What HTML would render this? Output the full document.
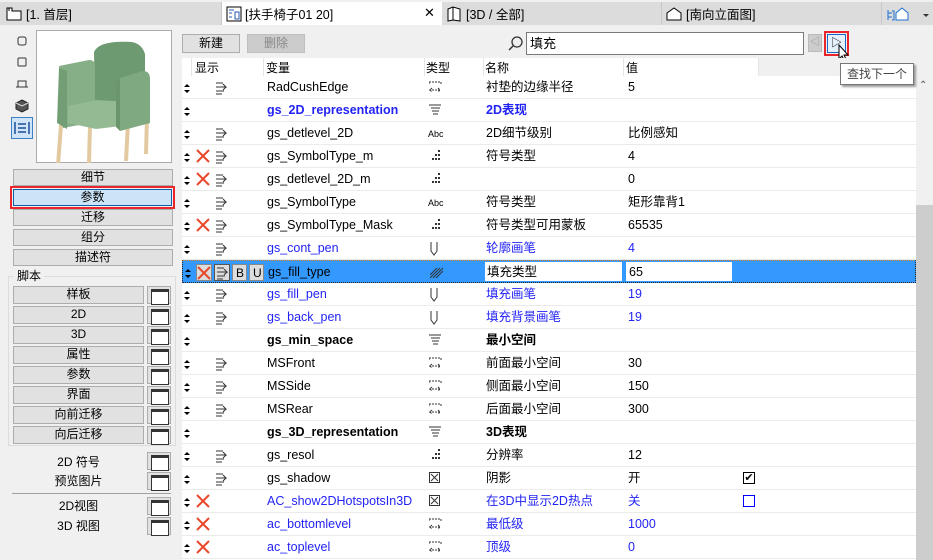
<!DOCTYPE html>
<html><head><meta charset="utf-8"><style>
*{margin:0;padding:0;box-sizing:border-box}
body{width:933px;height:560px;overflow:hidden;background:#f0f0f0;font-family:"Liberation Sans","Noto Sans CJK SC",sans-serif;font-size:12px;color:#000;position:relative}
.a{position:absolute}
.tabs{left:0;top:0;width:933px;height:25px;background:#dcdcdc;border-top:2px solid #f0f0f0}
.tab{top:2px;height:23px;line-height:22px;font-size:12.5px;padding-left:4px}
.btn{background:#e1e1e1;border:1px solid #adadad;text-align:center;line-height:15px;font-size:12px}
.ib{background:#e1e1e1;border:1px solid #adadad;width:24px;height:18px}
.ib:after{content:"";position:absolute;left:3px;top:2px;width:16px;height:12px;border:1px solid #333;border-top-width:3px;background:#fff}
.grid{left:182px;top:58px;width:734px;height:502px;background:#fff}
.row{position:absolute;left:0;width:734px;height:23px;border-bottom:1px solid #ebebeb;line-height:22px;font-size:12.5px}
.row span{position:absolute;white-space:nowrap}
.b{color:#2323f5}
.bb{color:#2323f5;font-weight:bold}
.k{font-weight:bold}
</style></head><body>
<div class="a tabs">
 <div class="a" style="left:0;top:0;width:222px;height:23px;border-right:1px solid #c8c8c8"></div>
 <svg class="a" style="left:6px;top:4px" width="16" height="16"><path d="M1 14V2h5v3h9v9z" fill="#fff" stroke="#000"/><path d="M3 2v3" stroke="#000"/></svg>
 <div class="a tab" style="left:22px">[1. 首层]</div>
 <div class="a" style="left:222px;top:0;width:220px;height:23px;background:#fff"></div>
 <svg class="a" style="left:226px;top:4px" width="16" height="16"><rect x="1" y="1" width="14" height="14" fill="#fff" stroke="#000"/><path d="M3 4h5M3 7h3M3 11h3M9 6h4v7H9z" stroke="#2a5bb0" fill="none"/></svg>
 <div class="a tab" style="left:241px">[扶手椅子01 20]</div>
 <div class="a" style="left:424px;top:3px;font-size:13px">✕</div>
 <svg class="a" style="left:446px;top:4px" width="16" height="16"><path d="M2 3l5-2 7 2v12l-7-1-5 1z" fill="#fff" stroke="#000"/><path d="M7 1v13" stroke="#000"/></svg>
 <div class="a tab" style="left:462px">[3D / 全部]</div>
 <div class="a" style="left:661px;top:0;width:1px;height:23px;background:#c8c8c8"></div>
 <svg class="a" style="left:666px;top:5px" width="16" height="14"><path d="M1 13V6l7-5 7 5v7z" fill="#fff" stroke="#000"/></svg>
 <div class="a tab" style="left:682px">[南向立面图]</div>
 <div class="a" style="left:881px;top:0;width:1px;height:23px;background:#c8c8c8"></div>
 <svg class="a" style="left:886px;top:4px" width="44" height="16"><path d="M2 4v10M2 7h4M2 11h4M6 5h2v9H6" stroke="#1d6fd0" fill="none"/><path d="M10 14V7l6-5 6 5v7zM16 2l6 5" fill="#fff" stroke="#1d6fd0"/><path d="M37 8h6l-3 3z" fill="#333"/></svg>
</div>

<svg class="a" style="left:13px;top:34px" width="20" height="106"><rect x="5" y="3" width="8" height="8" rx="2" fill="none" stroke="#333"/><rect x="5" y="24" width="8" height="8" rx="1" fill="none" stroke="#333"/><path d="M5 53v-6h8v6M3 53h12" fill="none" stroke="#333"/><path d="M9 66l6 3v6l-6 3-6-3v-6z" fill="#555" stroke="#222"/><path d="M3 69l6 3 6-3" stroke="#ddd" fill="none"/></svg>
<div class="a" style="left:11px;top:117px;width:22px;height:22px;background:#cfe4f7;border:1px solid #3c7fc7"></div>
<svg class="a" style="left:14px;top:121px" width="16" height="14"><path d="M1 1v12M15 1v12M4 3h8M4 7h8M4 11h8" stroke="#1a4f99" stroke-width="1.5"/></svg>

<div class="a" style="left:36px;top:30px;width:136px;height:133px;background:#fff;border:1px solid #aaa"></div>
<svg class="a" style="left:36px;top:30px" width="136" height="133">
 <path d="M25 95l-3 40M54 95l-1 38M92 93l-2 38M111 86l-1 38" stroke="#e3c9a0" stroke-width="4"/>
 <path d="M58 22q5-12 38-10q10 2 13 12v45l-50 8z" fill="#6e9a71"/>
 <path d="M23 36l30-6q6 0 6 6v56l-32 6z" fill="#86af87"/>
 <path d="M23 38l-2 55 10 6v-58z" fill="#739e75"/>
 <path d="M32 76l28-6 50 3v20l-50 6-28-6z" fill="#93ba92"/>
 <path d="M84 48l23-7q7 0 7 8v44l-30 8z" fill="#7fa980"/>
 <path d="M84 48l-4 5v44l4 4z" fill="#6b966d"/>
</svg>

<div class="a btn" style="left:13px;top:169px;width:160px;height:17px">细节</div>
<div class="a" style="left:10px;top:186px;width:165px;height:23px;border:2px solid #e8262b"></div>
<div class="a btn" style="left:13px;top:189px;width:159px;height:17px;background:#cce4f7;border-color:#0f5fa8">参数</div>
<div class="a btn" style="left:13px;top:209px;width:160px;height:17px">迁移</div>
<div class="a btn" style="left:13px;top:229px;width:160px;height:17px">组分</div>
<div class="a btn" style="left:13px;top:249px;width:160px;height:17px">描述符</div>
<div class="a" style="left:8px;top:276px;width:168px;height:170px;border:1px solid #dcdcdc"></div>
<div class="a" style="left:14px;top:267px;background:#f0f0f0;padding:0 3px;font-size:12px">脚本</div>
<div class="a btn" style="left:13px;top:286px;width:131px;height:18px">样板</div><div class="a ib" style="left:147px;top:286px"></div>
<div class="a btn" style="left:13px;top:306px;width:131px;height:18px">2D</div><div class="a ib" style="left:147px;top:306px"></div>
<div class="a btn" style="left:13px;top:326px;width:131px;height:18px">3D</div><div class="a ib" style="left:147px;top:326px"></div>
<div class="a btn" style="left:13px;top:346px;width:131px;height:18px">属性</div><div class="a ib" style="left:147px;top:346px"></div>
<div class="a btn" style="left:13px;top:366px;width:131px;height:18px">参数</div><div class="a ib" style="left:147px;top:366px"></div>
<div class="a btn" style="left:13px;top:386px;width:131px;height:18px">界面</div><div class="a ib" style="left:147px;top:386px"></div>
<div class="a btn" style="left:13px;top:406px;width:131px;height:18px">向前迁移</div><div class="a ib" style="left:147px;top:406px"></div>
<div class="a btn" style="left:13px;top:426px;width:131px;height:18px">向后迁移</div><div class="a ib" style="left:147px;top:426px"></div>
<div class="a" style="left:13px;top:453px;width:131px;text-align:center">2D 符号</div><div class="a ib" style="left:147px;top:452px"></div>
<div class="a" style="left:13px;top:472px;width:131px;text-align:center">预览图片</div><div class="a ib" style="left:147px;top:472px"></div>
<div class="a" style="left:12px;top:493px;width:159px;height:1px;background:#a0a0a0"></div>
<div class="a" style="left:13px;top:497px;width:131px;text-align:center">2D视图</div><div class="a ib" style="left:147px;top:497px"></div>
<div class="a" style="left:13px;top:517px;width:131px;text-align:center">3D 视图</div><div class="a ib" style="left:147px;top:517px"></div>

<div class="a btn" style="left:182px;top:34px;width:58px;height:19px;line-height:17px">新建</div>
<div class="a btn" style="left:247px;top:34px;width:58px;height:19px;line-height:17px;background:#ccc;border-color:#bfbfbf;color:#888">删除</div>
<svg class="a" style="left:508px;top:36px" width="16" height="16"><circle cx="9" cy="6" r="5" fill="none" stroke="#333" stroke-width="1.3"/><path d="M5 10l-4 4" stroke="#333" stroke-width="1.5"/></svg>
<div class="a" style="left:526px;top:32px;width:278px;height:23px;background:#fff;border:1px solid #7a7a7a;padding-left:3px;line-height:21px;font-size:13px">填充</div>
<div class="a" style="left:808px;top:34px;width:14px;height:18px;background:#ccc;border:1px solid #bbb;color:#999;font-size:10px;line-height:16px;text-align:center">◁</div>
<div class="a" style="left:824px;top:31px;width:25px;height:25px;border:2px solid #e8262b"></div>
<div class="a" style="left:827px;top:34px;width:19px;height:19px;background:#e5f1fb;border:1px solid #1a66c2;font-size:11px;line-height:17px;text-align:center">▷</div>
<svg class="a" style="left:838px;top:44px" width="14" height="20"><path d="M1 1v14l3-3 3 6 2-1-3-6h4z" fill="#fff" stroke="#000"/></svg>

<div class="a grid">
 <div class="a" style="left:0;top:0;width:734px;height:18px;background:#f0f0f0"></div>
 <div class="a" style="left:0;top:0;width:577px;height:18px;background:#fff"></div>
 <div class="a" style="left:13px;top:1px">显示</div>
 <div class="a" style="left:84px;top:1px">变量</div>
 <div class="a" style="left:244px;top:1px">类型</div>
 <div class="a" style="left:303px;top:1px">名称</div>
 <div class="a" style="left:444px;top:1px">值</div>
 <div class="a" style="left:9px;top:0;width:1px;height:18px;background:#e5e5e5"></div>
 <div class="a" style="left:81px;top:0;width:1px;height:18px;background:#e5e5e5"></div>
 <div class="a" style="left:242px;top:0;width:1px;height:18px;background:#e5e5e5"></div>
 <div class="a" style="left:301px;top:0;width:1px;height:18px;background:#e5e5e5"></div>
 <div class="a" style="left:441px;top:0;width:1px;height:18px;background:#e5e5e5"></div>
 <div class="a" style="left:576px;top:0;width:1px;height:18px;background:#e5e5e5"></div>
 <div id="rows"></div>
</div>
<div class="a" style="left:916px;top:76px;width:17px;height:484px;background:#f0f0f0"></div>
<div class="a" style="left:916px;top:205px;width:17px;height:355px;background:#cdcdcd"></div>
<div class="a" style="left:919px;top:80px;font-size:10px;color:#555">⌃</div>
<div class="a" style="left:840px;top:63px;width:74px;height:22px;background:#fff;border:1px solid #767676;box-shadow:2px 2px 2px #999;line-height:20px;text-align:center;font-size:12px;color:#444">查找下一个</div>

<svg width="0" height="0" style="position:absolute"><defs>
<g id="srt"><path d="M0 4l3-3 3 3zM0 7l3 3 3-3z" fill="#000"/></g>
<g id="x"><path d="M1 1l12 12M13 1L1 13" stroke="#e8482a" stroke-width="2"/></g>
<g id="sh"><path d="M0 1h7M0 5h10l-3-3M10 5l-3 3M0 9h8M0 12h6" stroke="#333" fill="none"/></g>
<g id="len"><path d="M0 1h12M0 1v2M12 1v2M0 9h12M3 7l-2 2 2 2M9 7l2 2-2 2" stroke="#333" fill="none" stroke-dasharray="2 1"/></g>
<g id="ttl"><path d="M0 1h12M2 4h9M3 7h7M4 10h5" stroke="#333"/></g>
<g id="int"><path d="M9 0h2v2H9zM6 4h2v2H6zM9 4h2v2H9zM3 8h2v2H3zM6 8h2v2H6zM9 8h2v2H9z" fill="#333"/></g>
<g id="pen"><path d="M2 0v9l3 4 3-4V0" stroke="#333" fill="none"/></g>
<g id="bool"><rect x="0.5" y="0.5" width="10" height="10" fill="none" stroke="#333"/><path d="M2 2l7 7M9 2l-7 7" stroke="#333"/></g>
<g id="fill"><path d="M0 12L10 2M3 12L13 2M6 12L13 5M0 9L7 2" stroke="#333"/></g>
</defs></svg>

<script>
var R=[
["s","","RadCushEdge","len","衬垫的边缘半径","5",""],
["","","gs_2D_representation","ttl","2D表现","","bb"],
["s","","gs_detlevel_2D","abc","2D细节级别","比例感知",""],
["x","s","gs_SymbolType_m","int","符号类型","4",""],
["x","s","gs_detlevel_2D_m","int","","0",""],
["s","","gs_SymbolType","abc","符号类型","矩形靠背1",""],
["x","s","gs_SymbolType_Mask","int","符号类型可用蒙板","65535",""],
["s","","gs_cont_pen","pen","轮廓画笔","4","b"],
["sel","","gs_fill_type","fill","填充类型","65",""],
["s","","gs_fill_pen","pen","填充画笔","19","b"],
["s","","gs_back_pen","pen","填充背景画笔","19","b"],
["","","gs_min_space","ttl","最小空间","","k"],
["s","","MSFront","len","前面最小空间","30",""],
["s","","MSSide","len","侧面最小空间","150",""],
["s","","MSRear","len","后面最小空间","300",""],
["","","gs_3D_representation","ttl","3D表现","","k"],
["s","","gs_resol","int","分辨率","12",""],
["s","","gs_shadow","bool","阴影","开","",1],
["x","","AC_show2DHotspotsIn3D","bool","在3D中显示2D热点","关","b",2],
["x","","ac_bottomlevel","len","最低级","1000","b"],
["x","","ac_toplevel","len","顶级","0","b"]];
var h="";
R.forEach(function(r,i){
 var t=18+i*23,sel=r[0]=="sel",c=r[6];
 h+='<div class="row" style="top:'+t+'px;'+(sel?'background:#3399ff;border:1px dotted #222;border-top-color:#e08020':'')+'">';
 h+='<svg style="position:absolute;left:2px;top:7px" width="7" height="11"><use href="#srt"/></svg>';
 if(sel){
  h+='<svg style="position:absolute;left:13px;top:3px" width="70" height="17"><rect x="0.5" y="0.5" width="15" height="16" fill="#ddd" stroke="#888"/><g transform="translate(1,2)"><use href="#x"/></g><rect x="18.5" y="0.5" width="15" height="16" fill="#ddd" stroke="#555"/><g transform="translate(21,3)"><use href="#sh"/></g><rect x="36.5" y="0.5" width="14" height="16" fill="#ddd" stroke="#888"/><text x="40" y="13" font-size="12" font-family="Liberation Sans">B</text><rect x="53.5" y="0.5" width="14" height="16" fill="#ddd" stroke="#888"/><text x="57" y="13" font-size="12" font-family="Liberation Sans">U</text></svg>';
 } else {
  if(r[0]=="x") h+='<svg style="position:absolute;left:14px;top:4px" width="14" height="14"><use href="#x"/></svg>';
  if(r[0]=="s"||r[1]=="s") h+='<svg style="position:absolute;left:34px;top:6px" width="12" height="13"><use href="#sh"/></svg>';
 }
 h+='<span class="'+c+'" style="left:85px;top:0">'+r[2]+'</span>';
 if(r[3]=="abc") h+='<span style="left:246px;font-size:9px;top:1px">Abc</span>';
 else h+='<svg style="position:absolute;left:247px;top:5px" width="14" height="14"><use href="#'+r[3]+'"/></svg>';
 if(sel){
  h+='<div style="position:absolute;left:302px;top:1px;width:137px;height:19px;background:#fff"></div><div style="position:absolute;left:443px;top:1px;width:106px;height:19px;background:#fff"></div>';
 }
 h+='<span class="'+c+'" style="left:304px">'+r[4]+'</span>';
 h+='<span class="'+(c=="bb"||c=="k"?"":c)+'" style="left:446px">'+r[5]+'</span>';
 if(r[7]==1) h+='<div style="position:absolute;left:561px;top:5px;width:12px;height:12px;border:1px solid #000;font-size:11px;line-height:10px;text-align:center">✔</div>';
 if(r[7]==2) h+='<div style="position:absolute;left:561px;top:5px;width:12px;height:12px;border:1px solid #00f"></div>';
 h+='</div>';
});
document.getElementById("rows").innerHTML=h;
</script>
</body></html>
